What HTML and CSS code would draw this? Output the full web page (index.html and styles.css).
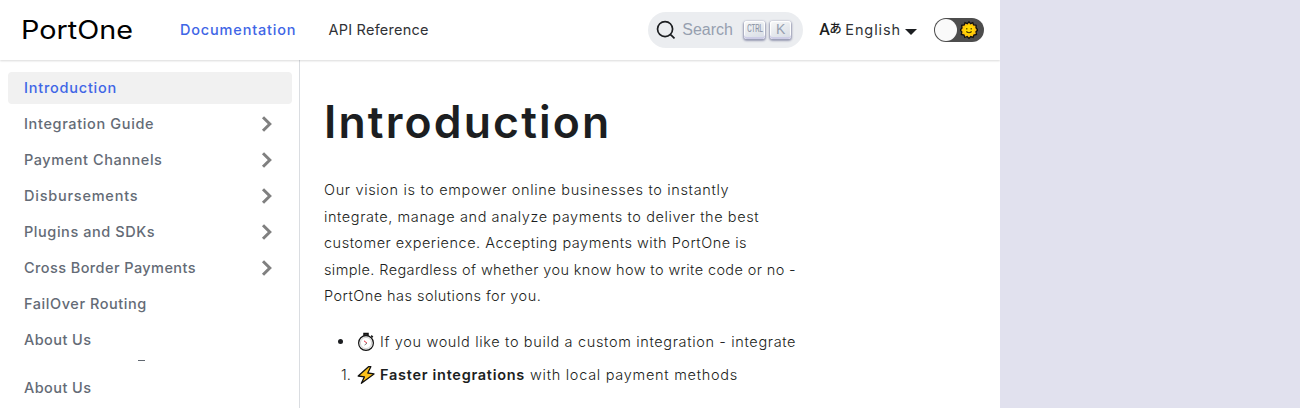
FILE: index.html
```html
<!DOCTYPE html>
<html lang="en">
<head>
<meta charset="utf-8">
<title>Introduction | PortOne</title>
<link rel="stylesheet" href="styles.css">
</head>
<body>
<div class="app">
  <header class="navbar">
    <svg class="logo" width="114" height="28" viewBox="0 0 114 28"><text class="logo-text" x="-1" y="22.5" textLength="112" lengthAdjust="spacingAndGlyphs">PortOne</text></svg>
    <nav class="links"><a class="link active">Documentation</a><a class="link">API Reference</a></nav>
    <div class="search">
      <svg class="lens" width="20" height="20" viewBox="0 0 20 20"><path d="M14.386 14.386l4.0877 4.0877-4.0877-4.0877c-2.9418 2.9419-7.7115 2.9419-10.6533 0-2.9419-2.9418-2.9419-7.7115 0-10.6533 2.9418-2.9419 7.7115-2.9419 10.6533 0 2.9419 2.9418 2.9419 7.7115 0 10.6533z"/></svg>
      <span class="placeholder">Search</span>
      <kbd class="key"><span class="ctrl">CTRL</span></kbd><kbd class="key">K</kbd>
    </div>
    <div class="language"><span class="lang-a">A</span><span class="lang-j">あ</span><span class="lang-name">English</span><i class="caret"></i></div>
    <div class="toggle"><span class="knob"></span>
      <svg class="sun" width="18" height="18" viewBox="0 0 18 18"><path d="M9 .8l1.6 1.9L12.8 1.6l.8 2.3 2.5.3-.1 2.5L17.7 9 16 10.8l.5 2.7-2.6.5-.8 2.4-2.4-.8L9 17.4l-1.8-1.9-2.4 1-.8-2.5-2.6-.5.4-2.6L.3 9l1.7-2-.3-2.6 2.6-.4L5 1.6l2.3 1.1z" fill="#ffc20e" stroke="#111" stroke-width="1.3"/><circle cx="9" cy="9" r="4.9" fill="#ffda00"/><path d="M6.8 7v1.6M11.2 7v1.6M6.3 10.5q2.7 2.4 5.4 0" fill="none" stroke="#493400" stroke-width="1.1"/></svg>
    </div>
  </header>
  <div class="body">
    <aside class="sidebar">
      <a class="item current"><span class="s1">Introduction</span></a>
      <a class="item"><span class="s2">Integration Guide</span><svg class="chev" width="12" height="16" viewBox="0 0 12 16"><path d="M2 1.2L8.8 8 2 14.8"/></svg></a>
      <a class="item"><span class="s3">Payment Channels</span><svg class="chev" width="12" height="16" viewBox="0 0 12 16"><path d="M2 1.2L8.8 8 2 14.8"/></svg></a>
      <a class="item"><span class="s1">Disbursements</span><svg class="chev" width="12" height="16" viewBox="0 0 12 16"><path d="M2 1.2L8.8 8 2 14.8"/></svg></a>
      <a class="item"><span class="s3">Plugins and SDKs</span><svg class="chev" width="12" height="16" viewBox="0 0 12 16"><path d="M2 1.2L8.8 8 2 14.8"/></svg></a>
      <a class="item"><span class="s4">Cross Border Payments</span><svg class="chev" width="12" height="16" viewBox="0 0 12 16"><path d="M2 1.2L8.8 8 2 14.8"/></svg></a>
      <a class="item"><span class="s3">FailOver Routing</span></a>
      <a class="item"><span class="s4">About Us</span></a>
      <i class="sliver"></i>
      <a class="item"><span class="s4">About Us</span></a>
    </aside>
    <main class="content">
      <h1>Introduction</h1>
      <p class="lead"><span class="p1">Our vision is to empower online businesses to instantly</span><br><span class="p2">integrate, manage and analyze payments to deliver the best</span><br><span class="p3">customer experience. Accepting payments with PortOne is</span><br><span class="p4">simple. Regardless of whether you know how to write code or no -</span><br><span class="p5">PortOne has solutions for you.</span></p>
      <div class="entry"><span class="mark dot"></span><svg class="emoji" width="18" height="20" viewBox="0 0 18 20"><path d="M7 1.5h4v1.8H7zM14.2 3.6l1.6 1.6" fill="#888" stroke="#111" stroke-width="1.5"/><circle cx="9" cy="11" r="7.4" fill="#f3f3f3" stroke="#111" stroke-width="1.2"/><circle cx="9" cy="11" r="5.6" fill="#fff" stroke="#c9c9c9" stroke-width=".8"/><path d="M7 8.8l3 2.4" stroke="#e03040" fill="none"/><path d="M10 11.2l-2.4 1.8" stroke="#777" fill="none"/></svg><span class="p6">If you would like to build a custom integration - integrate</span></div>
      <div class="entry numbered"><span class="mark">1.</span><svg class="emoji" width="18" height="20" viewBox="0 0 18 20"><path d="M11.5 1.7L1.2 11l6.2.9-3 6.4L17 8.9l-6.2-.9 3-6.3z" fill="#fcc21b" stroke="#111" stroke-width="1.3" stroke-linejoin="round"/></svg><b>Faster integrations</b><span class="p7">with local payment methods</span></div>
    </main>
  </div>
</div>
</body>
</html>
```

FILE: styles.css
```css
body{margin:0;background:#e1e1ee;font-family:Inter,sans-serif;color:#1c1e21;font-size:14.5px}
.app{width:1000px;height:408px;background:#fff;overflow:hidden}

.navbar{position:relative;height:60px;display:flex;align-items:center;background:#fff;box-shadow:0 1px 2px rgba(0,0,0,.15);padding:0 16px 0 22px;box-sizing:border-box}
.logo-text{font:400 25px Inter,sans-serif;fill:#000}
.links{display:flex;margin-left:44px;padding-bottom:2px}
.link{letter-spacing:.24px;color:#303236;white-space:nowrap}
.active{font-weight:450;color:#3f66e6;letter-spacing:.82px;margin-right:32px}
.search{display:flex;align-items:center;margin-left:auto;width:155px;height:36px;border-radius:18px;background:#ebedf0;padding:0 0 0 8px;box-sizing:border-box}
.lens{flex:none}
.lens path{stroke:#1c1e21;stroke-width:1.7;fill:none;stroke-linecap:round}
.placeholder{flex:none;font:16px/20px "Liberation Sans",Arial,sans-serif;color:#969faf;margin-left:6px;width:62px}
.key{flex:none;display:flex;align-items:center;justify-content:center;width:21px;height:18px;margin-right:5px;padding-bottom:2px;box-sizing:border-box;border-radius:3px;background:linear-gradient(-26deg,#d5dbe4,#f8f8f8);box-shadow:inset 0 -2px 0 0 #cdcde6,inset 0 0 1px 1px #fff,0 1px 2px 1px rgba(30,35,90,.4);font:14px/16px "Liberation Sans",Arial,sans-serif;color:#969faf}
.ctrl{font:10px/12px "Liberation Sans",Arial,sans-serif;-webkit-text-stroke:.2px #8b94a6;color:#8b94a6;transform:scaleX(.6)}
.language{display:flex;align-items:center;margin-left:16px;height:24px}
.lang-a{font:500 16px/24px Roboto,sans-serif;width:10px}
.lang-j{font:500 12.5px/20px "Noto Sans CJK JP",sans-serif;width:16px;height:24px}
.lang-name{letter-spacing:.9px;color:#303236;padding-bottom:2px}
.caret{border:6px solid transparent;border-top:6px solid #1c1e21;border-bottom:0;margin-left:4px;margin-top:3px}
.toggle{display:flex;align-items:center;justify-content:space-between;width:50px;height:24px;border-radius:12px;background:#4d4d4d;margin-left:17px;padding:0 6px 0 1px;box-sizing:border-box}
.knob{width:22px;height:22px;border-radius:50%;background:#fafafa}

.body{display:flex;height:348px}
.sidebar{width:300px;padding:12px 8px 0;box-sizing:border-box;border-right:1px solid #dadde1}
.item{display:flex;align-items:center;justify-content:space-between;height:32px;margin-bottom:4px;padding:0 18px 0 16px;border-radius:4px;font-weight:450;color:#646b76}
.item span{padding-bottom:2px}
.current{margin-right:-1px;background:#f1f1f1;color:#3f66e6}
.chev path{fill:none;stroke:#808080;stroke-width:3}
.sliver{display:block;width:7px;height:1px;background:#606770;margin:0 0 11px 130px}
.s1{letter-spacing:.77px}
.s2{letter-spacing:.64px}
.s3{letter-spacing:.56px}
.s4{letter-spacing:.42px}

.content{padding:32px 24px 0;font-weight:300}
h1{margin:0;font-size:44.5px;line-height:60px;font-weight:600;letter-spacing:2.15px}
.lead{margin:25px 0 20px;line-height:26.5px;white-space:nowrap}
.p1{letter-spacing:.65px}
.p2{letter-spacing:.58px}
.p3{letter-spacing:.51px}
.p4{letter-spacing:.38px}
.p5{letter-spacing:.46px}
.p6{letter-spacing:.65px}
.p7{letter-spacing:.72px}
.entry{display:flex;align-items:center;height:26px;margin-top:-1px;white-space:nowrap}
.numbered{margin-top:7px}
.mark{width:33px;box-sizing:border-box;padding-left:17px;color:#1c1e21}
.dot::before{content:"";display:block;width:5px;height:5px;margin-left:-3px;border-radius:50%;background:#1c1e21}
.emoji{margin-right:5px}
b{font-weight:600;letter-spacing:.72px;margin-right:5px}
```
